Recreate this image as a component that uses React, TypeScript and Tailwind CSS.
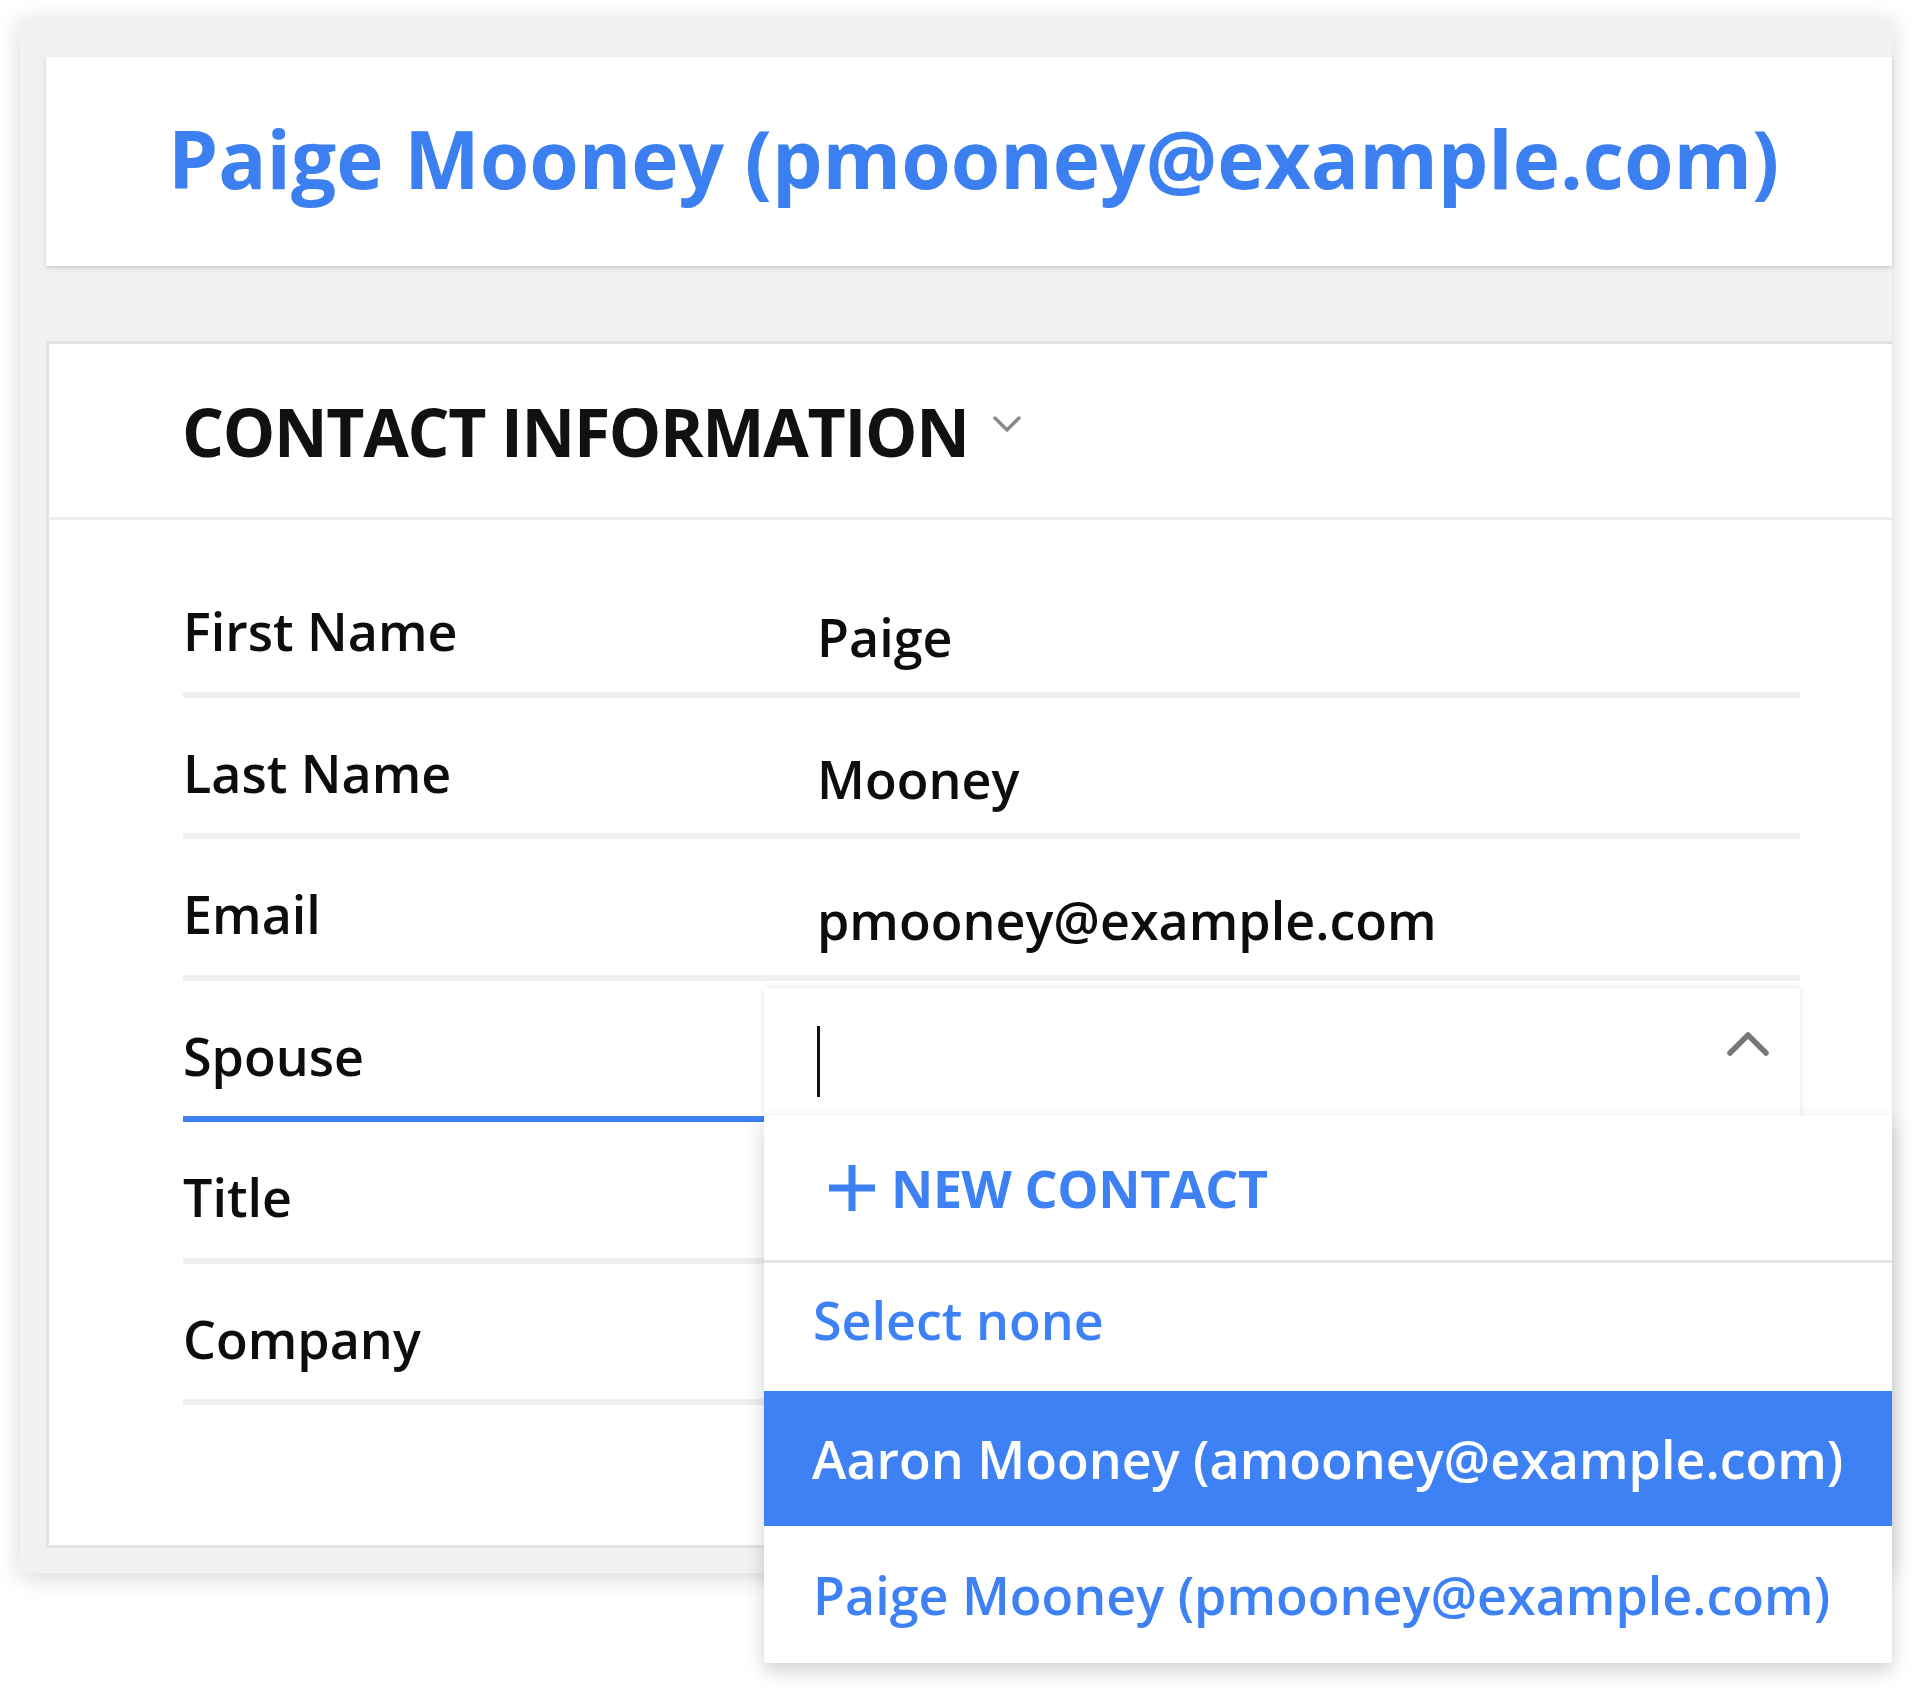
import React from "react";

const rows: { label: string; value: string; active?: boolean }[] = [
  { label: "First Name", value: "Paige" },
  { label: "Last Name", value: "Mooney" },
  { label: "Email", value: "pmooney@example.com" },
  { label: "Spouse", value: "", active: true },
  { label: "Title", value: "" },
  { label: "Company", value: "" },
];

export default function App() {
  return (
    <div className="w-[1912px] h-[1688px] bg-white overflow-hidden pt-[18px] pl-[20px] font-['Open_Sans',sans-serif]">
      <div className="w-[1872px] h-[1555px] bg-[#f1f1f1] shadow-[0_4px_22px_rgba(0,0,0,0.16)] pt-[39px] pl-[26px] flex flex-col">
        {/* Header card */}
        <div className="h-[209px] bg-white shadow-[0_2px_4px_rgba(0,0,0,0.16)] flex items-center pl-[122px] pb-[8px]">
          <h1 className="text-[80px] leading-none font-bold text-[#3b7ff1] tracking-[0px]">
            Paige Mooney (pmooney@example.com)
          </h1>
        </div>

        {/* Contact card */}
        <div className="relative mt-[75px] h-[1207px] bg-white border-[3px] border-r-0 border-[#e2e2e2]">
          <div className="h-[176px] border-b-[3px] border-[#eeeeee] flex items-center pl-[133px]">
            <h2 className="text-[66px] leading-none font-bold text-[#111111] tracking-[-1.3px]">
              CONTACT INFORMATION
            </h2>
            <svg className="ml-[23px] mt-[-14px]" width="30" height="20" viewBox="0 0 30 20" fill="none">
              <path d="M3 4 L15 16 L27 4" stroke="#8a8a8a" strokeWidth="3.5" strokeLinecap="round" strokeLinejoin="round" />
            </svg>
          </div>

          <div className="mt-[36px] pl-[134px] flex flex-col">
            {rows.map((r) => (
              <div
                key={r.label}
                className={
                  "w-[1617px] h-[141.5px] flex border-b-[6px] " +
                  (r.active ? "border-[#3e81f4]" : "border-[#efefef]")
                }
              >
                <div className="w-[634px] pt-[45px] text-[52px] leading-[60px] font-semibold text-[#0d0d0d]">
                  {r.label}
                </div>
                <div className="pt-[51px] text-[52px] leading-[60px] font-semibold text-[#0d0d0d]">
                  {r.value}
                </div>
              </div>
            ))}
          </div>

          {/* Dropdown input */}
          <div className="absolute z-10 left-[715px] top-[644px] w-[1036px] h-[128px] bg-white shadow-[0_0_6px_rgba(0,0,0,0.12)] flex items-start justify-between pl-[53px] pr-[30px]">
            <div className="mt-[38px] w-[3px] h-[71px] bg-[#111111]" />
            <svg className="mt-[42px]" width="44" height="27" viewBox="0 0 44 27" fill="none">
              <path d="M4 23 L22 5 L40 23" stroke="#777777" strokeWidth="5.5" strokeLinecap="round" strokeLinejoin="round" />
            </svg>
          </div>

          {/* Dropdown list */}
          <div className="absolute z-20 left-[715px] top-[772px] w-[1128px] bg-white shadow-[0_8px_18px_rgba(0,0,0,0.18)] flex flex-col">
            <div className="h-[147px] border-b-[3px] border-[#e3e3e3] flex items-center pl-[63px] gap-[14px]">
              <svg width="50" height="50" viewBox="0 0 50 50" fill="none">
                <path d="M25 2 V48 M2 25 H48" stroke="#3e81f4" strokeWidth="7" />
              </svg>
              <span className="text-[52px] leading-none font-bold text-[#3e81f4] tracking-[-0.4px]">NEW CONTACT</span>
            </div>
            <div className="h-[128px] flex items-center pl-[49px] pb-[14px]">
              <span className="text-[52px] leading-none font-semibold text-[#3e81f4]">Select none</span>
            </div>
            <div className="h-[135px] bg-[#3e81f4] flex items-center pl-[48px]">
              <span className="text-[52px] leading-none font-semibold text-white">Aaron Mooney (amooney@example.com)</span>
            </div>
            <div className="h-[137px] flex items-center pl-[49px]">
              <span className="text-[52px] leading-none font-semibold text-[#3e81f4]">Paige Mooney (pmooney@example.com)</span>
            </div>
          </div>
        </div>
      </div>
    </div>
  );
}
